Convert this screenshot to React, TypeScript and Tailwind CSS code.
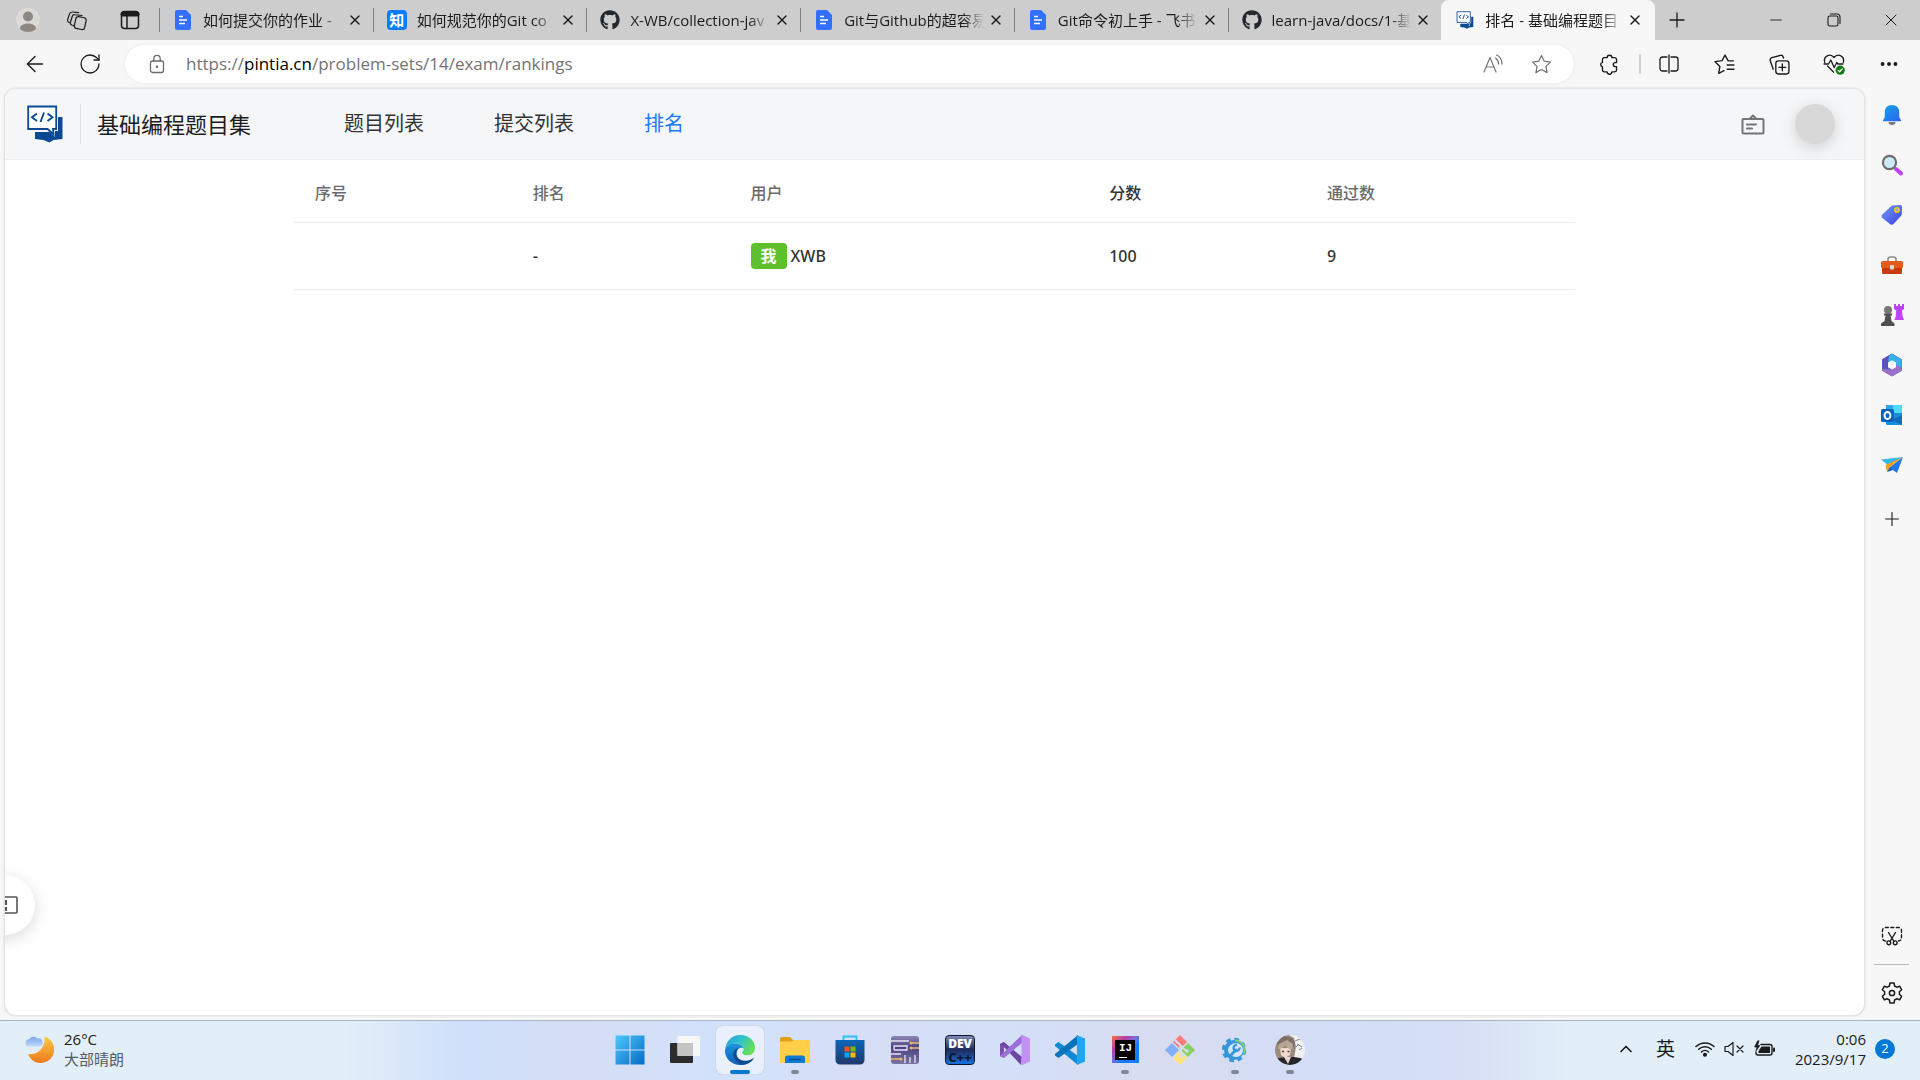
import React from "react";
import { ArrowLeft, RotateCw, X, Plus, Minus, MoreHorizontal, ChevronUp } from "lucide-react";
import { FaGithub } from "react-icons/fa";

type IconProps = { className?: string };

const line = {
  fill: "none",
  stroke: "currentColor",
  strokeLinecap: "round" as const,
  strokeLinejoin: "round" as const,
};

/* ---------- favicons ---------- */

function DocIcon({ className = "" }: IconProps) {
  return (
    <svg viewBox="0 0 16 20" className={`h-5 w-4 ${className}`}>
      <path d="M2 0h9l5 5v13a2 2 0 0 1-2 2H2a2 2 0 0 1-2-2V2a2 2 0 0 1 2-2z" fill="#3370ff" />
      <path d="M4 6.500h4M4 10h8M4 13.500h6" stroke="#fff" strokeWidth="1.400" />
    </svg>
  );
}

function ZhihuIcon() {
  return (
    <span className="flex size-5 items-center justify-center rounded bg-[#0a7cff] text-[15px] leading-none font-bold text-white">
      知
    </span>
  );
}

function PintiaIcon({ className = "" }: IconProps) {
  return (
    <svg viewBox="0 0 36 38" className={className}>
      <path d="M31 12h4.500v22l-9 1-4 2.500-6-2.500-8.500-1V27h15l5 5V26h3z" fill="#0b4a92" />
      <path d="M1.200 1.500h28v22.500h-3.200l.6 5.500-6-5.500H1.200z" fill="#fff" stroke="#0b4a92" strokeWidth="1.800" />
      <path d="M10 8.500l-5 3.700 5 3.700M20.500 8.500l5 3.700-5 3.700M17 7.500l-3.500 9.500" fill="none" stroke="#0b4a92" strokeWidth="1.900" />
    </svg>
  );
}

/* ---------- browser toolbar icons ---------- */

function WorkspacesIcon() {
  return (
    <svg viewBox="0 0 22 22" className="size-[22px]" {...line} strokeWidth="1.200">
      <rect x="9" y="8" width="10.500" height="12" rx="2.500" transform="rotate(12 14 14)" />
      <path d="M7.500 16.500 5.800 16a2.200 2.200 0 0 1-1.400-2.800l1.900-6a2.200 2.200 0 0 1 2.500-1.500l7.200.8" />
      <path d="M3.500 13.500a2.200 2.200 0 0 1-1.800-2.900l1.700-5.400A3 3 0 0 1 6.500 3l6 .6" />
    </svg>
  );
}

function TabPaneIcon() {
  return (
    <svg viewBox="0 0 20 20" className="size-5" {...line} strokeWidth="1.500">
      <rect x="1.500" y="1.500" width="17" height="17" rx="3" />
      <path d="M3 4h14" strokeWidth="5" />
      <path d="M7 6v12" />
    </svg>
  );
}

function LockIcon() {
  return (
    <svg viewBox="0 0 16 20" className="h-5 w-4 text-[#6b6b6b]" {...line} strokeWidth="1.300">
      <rect x="1.500" y="7" width="13" height="11.500" rx="2" />
      <path d="M4.800 7V4.500a3.200 3.200 0 0 1 6.400 0V7" />
      <circle cx="8" cy="12.700" r=".6" fill="currentColor" />
    </svg>
  );
}

function ReadAloudIcon() {
  return (
    <svg viewBox="0 0 20 20" className="size-5 text-[#757575]" {...line} strokeWidth="1.200">
      <path d="M1 18 7 3.500 13 18M3.200 13h7.600" />
      <path d="M12.500 4a7 7 0 0 1 3 6M13.500 1c3.500 1.500 5.500 4.500 5.500 9" />
    </svg>
  );
}

const STAR = "M10 1.500l2.600 5.400 5.900.8-4.300 4.100 1.100 5.900-5.300-2.900-5.300 2.900 1.100-5.900L1.500 7.700l5.900-.8z";

function StarIcon() {
  return (
    <svg viewBox="0 0 20 20" className="size-[21px] text-[#757575]" {...line} strokeWidth="1.200">
      <path d={STAR} />
    </svg>
  );
}

function PuzzleIcon() {
  return (
    <svg viewBox="0 0 20 20" className="size-[21px]" {...line} strokeWidth="1.300">
      <path d="M4.500 3.500h3.200a2.300 2.300 0 0 1 4.600 0H15a1.700 1.700 0 0 1 1.700 1.700v3h-1.200a1.900 1.900 0 0 0 0 3.800h1.200v3.300A1.700 1.700 0 0 1 15 17h-2.700a2.300 2.300 0 0 1-4.600 0H5a1.700 1.700 0 0 1-1.700-1.700v-3a2.300 2.300 0 0 1 0-4.400V5.200a1.700 1.700 0 0 1 1.200-1.700z" />
    </svg>
  );
}

function SplitIcon() {
  return (
    <svg viewBox="0 0 20 20" className="size-5" {...line} strokeWidth="1.300">
      <path d="M8 3H3.500A2.500 2.500 0 0 0 1 5.500v9A2.500 2.500 0 0 0 3.500 17H8M12 3h4.500A2.500 2.500 0 0 1 19 5.500v9a2.500 2.500 0 0 1-2.500 2.500H12M10 1v18" />
    </svg>
  );
}

function FavoritesIcon() {
  return (
    <svg viewBox="0 0 20 20" className="size-[21px]" {...line} strokeWidth="1.300">
      <path d="M18.500 6.500h-5L10.500 1 7.700 6.300 1 7.300l4.600 4.500L4.500 18.500l5-2.600" />
      <path d="M12.500 10.500h6.500M12.500 14.500h6.500" />
    </svg>
  );
}

function CollectionsIcon() {
  return (
    <svg viewBox="0 0 20 20" className="size-[21px]" {...line} strokeWidth="1.300">
      <rect x="6.500" y="6.500" width="12.500" height="12.500" rx="2.500" />
      <path d="M12.700 9.500v6.500M9.500 12.700H16M4 14.500 1.200 6.500a2.300 2.300 0 0 1 1.600-3l8-2.200a2.300 2.300 0 0 1 2.700 1.500l.3 1" />
    </svg>
  );
}

function EssentialsIcon() {
  return (
    <svg viewBox="0 0 22 22" className="size-[22px]" {...line} strokeWidth="1.300">
      <path d="M1.800 9.500C-.2 3.500 7-.5 11 4.500c4-5 11.200-1 9.200 5M4.500 13l6 6" />
      <path d="M1 11h4.500l2.300-4 3.400 7.500 2.600-5 1.200 1.500h5" />
      <circle cx="17.200" cy="17.200" r="4.600" fill="#107c10" stroke="none" />
      <path d="m15.200 17.300 1.400 1.400 2.600-2.800" stroke="#fff" />
    </svg>
  );
}

function RestoreIcon() {
  return (
    <svg viewBox="0 0 14 14" className="size-3.5" {...line} strokeWidth="1.100">
      <rect x="1" y="3" width="10" height="10" rx="1.800" />
      <path d="M3.500 1H10a3 3 0 0 1 3 3v6.500" />
    </svg>
  );
}

/* ---------- side bar icons ---------- */

function BellIcon() {
  return (
    <svg viewBox="0 0 22 24" className="h-6 w-[22px]">
      <defs>
        <linearGradient id="bell" x1="0" y1="0" x2="1" y2="1">
          <stop offset="0" stopColor="#12a5e6" />
          <stop offset="1" stopColor="#2b62f0" />
        </linearGradient>
      </defs>
      <path d="M7.500 19h7a3.500 3 0 0 1-7 0z" fill="#7a7a7a" />
      <path d="M11 2c4.500 0 7.200 3.200 7.200 7v5l1.800 3.300c.2.600 0 .9-.6.900H2.600c-.6 0-.8-.3-.6-.9L3.800 14V9c0-3.800 2.700-7 7.200-7z" fill="url(#bell)" />
    </svg>
  );
}

function SearchIcon() {
  return (
    <svg viewBox="0 0 22 22" className="size-[22px]">
      <path d="m15 15 5 4.500" stroke="#c340f0" strokeWidth="4" strokeLinecap="round" />
      <circle cx="8.500" cy="8.500" r="6.600" fill="#cdeafb" stroke="#6d6d6d" strokeWidth="2.200" />
    </svg>
  );
}

function TagIcon() {
  return (
    <svg viewBox="0 0 22 22" className="size-[22px]">
      <defs>
        <linearGradient id="tag" x1="0" y1="0" x2="1" y2="1">
          <stop offset="0" stopColor="#6f9cff" />
          <stop offset="1" stopColor="#3d3fe0" />
        </linearGradient>
      </defs>
      <path d="M12 1.500 19 1a2 2 0 0 1 2 2l-.2 7a3 3 0 0 1-.9 2l-7.400 8a2.500 2.500 0 0 1-3.300.2L1.500 14a2.500 2.500 0 0 1-.2-3.500l8.500-8a3 3 0 0 1 2.200-1z" fill="url(#tag)" />
      <circle cx="16" cy="6" r="2.200" fill="#8ea1ff" stroke="#f6c915" strokeWidth="1.600" />
    </svg>
  );
}

function ToolboxIcon() {
  return (
    <svg viewBox="0 0 24 20" className="h-5 w-6">
      <path d="M8 7V4.500A2.500 2.500 0 0 1 10.500 2h3A2.500 2.500 0 0 1 16 4.500V7" fill="none" stroke="#8c8c8c" strokeWidth="1.600" />
      <rect x="2" y="11" width="20" height="8" rx="1.500" fill="#c63c0a" />
      <rect x="1" y="6" width="22" height="7" rx="1.500" fill="#e35a1b" />
      <rect x="10" y="10" width="4" height="4.500" rx="1" fill="#d9d9d9" />
    </svg>
  );
}

function ChessIcon() {
  return (
    <svg viewBox="0 0 24 24" className="size-6">
      <path d="M14 1h2v2h2V1h2v2h2V1h2v5l-2 1.500.6 6L24 17h-9.500l1.200-3.500.6-6L14 6z" fill="#bd43f5" />
      <circle cx="8" cy="7" r="4" fill="#777" />
      <path d="M4 10.500h8v2h-1.500l1 5.500 3 2.500V23H1v-2.500L4.500 18l1-5.500H4z" fill="#505050" />
    </svg>
  );
}

function M365Icon() {
  return (
    <svg viewBox="0 0 24 24" className="size-6">
      <path d="M12 1 21.500 6.500v11L12 23l-9.500-5.500v-11z" fill="#6a63c9" stroke="#6a63c9" strokeLinejoin="round" />
      <path d="M12 .8 6 4l-3.500 2.500v8L8 17V9.500l5-3z" fill="#5b52b8" />
      <path d="M12 .8 21.500 6.500V15L16 12V9.500L8 8.500 9 3z" fill="#37b0ec" />
      <path d="m21.500 15 .3 2.500L12 23.300 5 19.500 2.300 16 8 16.500l3 .5 5-3V12z" fill="#9c6fc8" />
      <path d="M12 7.300 16 9.600v4.600l-4 2.300-4-2.300V9.600z" fill="#f7f7f7" />
    </svg>
  );
}

function OutlookIcon() {
  return (
    <svg viewBox="0 0 24 24" className="size-6">
      <rect x="6" y="2" width="16" height="20" rx="1.500" fill="#1490df" />
      <path d="M13 2h9v8h-9z" fill="#50d9ff" />
      <path d="M6 2h7v8H6z" fill="#28a8ea" />
      <path d="m22 12-10 5 10 5z" fill="#0f6cbd" />
      <rect x="1" y="6" width="13" height="13" rx="1.500" fill="#0a63b8" />
      <ellipse cx="7.500" cy="12.500" rx="3" ry="3.500" fill="none" stroke="#fff" strokeWidth="1.900" />
    </svg>
  );
}

function PlaneIcon() {
  return (
    <svg viewBox="0 0 22 20" className="h-5 w-[22px]">
      <path d="M0 4.500 22 2 8 11z" fill="#38b6f0" />
      <path d="M22 2 8.500 12.500 16 18z" fill="#2277e8" />
      <path d="M22 2 4.500 10l1.500 7L9 12z" fill="#f0a01c" />
      <path d="m6 17 3-5 3 3z" fill="#1a5bb8" />
    </svg>
  );
}

function SnipIcon() {
  return (
    <svg viewBox="0 0 22 20" className="h-5 w-[22px]" {...line} strokeWidth="1.400">
      <path d="M4.500 15A3 3 0 0 1 1.500 12V4.500a3 3 0 0 1 3-3h13a3 3 0 0 1 3 3V12a3 3 0 0 1-3 3" strokeDasharray="3 2.500" />
      <path d="m7.500 6.500 5.500 9M14.500 6.500l-5.500 9" />
      <circle cx="7.800" cy="16.800" r="1.900" />
      <circle cx="14.200" cy="16.800" r="1.900" />
    </svg>
  );
}

function GearIcon() {
  return (
    <svg viewBox="0 0 22 22" className="size-[22px]" {...line} strokeWidth="1.500">
      <path d="M9 1h4l.6 3 2 1.200 3-1 2 3.500L18.400 9.800v2.400l2.200 2.100-2 3.500-3-1-2 1.200-.6 3H9l-.6-3-2-1.200-3 1-2-3.500 2.200-2.100V9.800L1.400 7.700l2-3.500 3 1 2-1.200z" />
      <circle cx="11" cy="11" r="2.600" />
    </svg>
  );
}

/* ---------- page icons ---------- */

function BoardIcon() {
  return (
    <svg viewBox="0 0 24 22" className="h-[22px] w-6 text-[#757575]" {...line} strokeWidth="2">
      <rect x="1.500" y="6" width="21" height="14.500" rx="1" />
      <path d="m9 5.500 3-3 3 3M6 11.500h9M6 15.500h5" />
    </svg>
  );
}

function PanelIcon() {
  return (
    <svg viewBox="0 0 22 18" className="h-[18px] w-[22px] text-[#555]" fill="none" stroke="currentColor" strokeWidth="1.600">
      <rect x="1" y="1" width="20" height="16" rx="1" />
      <path d="M10 4v5M10 11v4" strokeWidth="2" />
    </svg>
  );
}

/* ---------- task bar icons ---------- */

function WindowsIcon() {
  return (
    <svg viewBox="0 0 30 30" className="size-[30px]">
      <defs>
        <linearGradient id="win" gradientUnits="userSpaceOnUse" x1="0" y1="0" x2="30" y2="30">
          <stop offset="0" stopColor="#4ecbfb" />
          <stop offset="1" stopColor="#0468c8" />
        </linearGradient>
      </defs>
      <path d="M.5.5h14v14H.5zM15.500.5h14v14h-14zM.5 15.500h14v14h-14zM15.500 15.500h14v14h-14z" fill="url(#win)" />
    </svg>
  );
}

function TaskViewIcon() {
  return (
    <svg viewBox="0 0 30 30" className="size-[30px]">
      <rect x="0" y="8" width="23" height="20" rx="1" fill="#2c2c2c" />
      <rect x="7.500" y="1" width="22.500" height="20" rx="1" fill="#f7f7f7" />
      <rect x="7.500" y="8" width="15.500" height="13" fill="#c4c4c4" />
    </svg>
  );
}

function EdgeIcon() {
  return (
    <svg viewBox="0 0 32 32" className="size-8">
      <defs>
        <linearGradient id="edgeTop" x1="0" y1="0" x2="1" y2=".5">
          <stop offset="0" stopColor="#2597dc" />
          <stop offset=".5" stopColor="#2fc0cf" />
          <stop offset="1" stopColor="#66e05a" />
        </linearGradient>
        <linearGradient id="edgeLow" x1="0" y1="0" x2="0" y2="1">
          <stop offset="0" stopColor="#1d93dd" />
          <stop offset="1" stopColor="#1160b8" />
        </linearGradient>
      </defs>
      <path d="M1 16C2 7 8 1 16.500 1 25 1 31 7 31 13.500c0 4.500-3 8-7.500 8-3.500 0-5.500-1.500-5.500-2.700 0-1 1.500-1.500 1.500-4 0-3-3-5.300-7-5.300C6 9.500 2 12 1 16z" fill="url(#edgeTop)" />
      <path d="M1 16c1-4 5-6.500 10-6.500 5.500 0 8.500 2.500 8.500 5.300 0-1.800-6.500-2.300-7 4.700-.3 5 3 10 9 11-1.500.4-3 .5-5 .5C7 31 .5 24 1 16z" fill="url(#edgeLow)" />
      <path d="M12.500 18c-1 4 2 8 7 8.500 4 .3 7-.5 9.500-2.500.5 0 .8.500.5 1-2 3-5 4.800-8 5.500-7 1-12.500-5-12-10.500.3-3.500 2-5.500 5-6-1.200 1-1.700 2-2 4z" fill="#0e4a92" />
      <path d="M18 18.800c0 1.200 2 2.700 5.500 2.700 2.500 0 4-.7 5.500-1.800l.5 4.300c-4 2.500-8 3-11 2-4.500-1.500-6.500-5.500-4.500-9 1-1.700 3.500-2.500 5.500-2-.2 2-1.500 2.800-1.500 3.800z" fill="#e9f0fb" />
    </svg>
  );
}

function FolderIcon() {
  return (
    <svg viewBox="0 0 32 30" className="h-[30px] w-8">
      <path d="M1 4a2 2 0 0 1 2-2h8l3 3h15v5H1z" fill="#e0a010" />
      <path d="M1 6.500h12l2-1.500h14.500A1.500 1.500 0 0 1 31 6.500V27a1 1 0 0 1-1 1H2a1 1 0 0 1-1-1z" fill="#ffcf48" />
      <path d="M6 28v-5a2.500 2.500 0 0 1 2.500-2.500h15A2.500 2.500 0 0 1 26 23v5z" fill="#0f7ad4" />
      <path d="M10 24.500h12" stroke="#0a4f94" strokeWidth="1.500" />
    </svg>
  );
}

function StoreIcon() {
  return (
    <svg viewBox="0 0 30 30" className="size-[30px]">
      <defs>
        <linearGradient id="store" x1="0" y1="0" x2="0" y2="1">
          <stop offset="0" stopColor="#0b66b8" />
          <stop offset="1" stopColor="#1f3868" />
        </linearGradient>
      </defs>
      <path d="M8.500 6V1.500h13V6" fill="none" stroke="#2fc1f5" strokeWidth="2" />
      <path d="M.5 5h29v20a4.500 4.500 0 0 1-4.500 4.500H5A4.500 4.500 0 0 1 .5 25z" fill="url(#store)" />
      <path d="M9.500 11.500h5v5h-5z" fill="#f25022" />
      <path d="M15.500 11.500h5v5h-5z" fill="#7fba00" />
      <path d="M9.500 17.500h5v5h-5z" fill="#00a4ef" />
      <path d="M15.500 17.500h5v5h-5z" fill="#ffb900" />
    </svg>
  );
}

function CircuitIcon() {
  return (
    <svg viewBox="0 0 28 28" className="size-7">
      <defs>
        <linearGradient id="circuit" x1="0" y1="0" x2="0" y2="1">
          <stop offset="0" stopColor="#8e88b4" />
          <stop offset=".4" stopColor="#4b4284" />
          <stop offset="1" stopColor="#7a729f" />
        </linearGradient>
      </defs>
      <rect width="28" height="28" rx="3" fill="url(#circuit)" />
      <path d="M0 5h18M3 14v-4h14M3 14h13v-3M14 27v-8M19 27v-6M24 27v-8M10 18H0" fill="none" stroke="#e9e6f5" strokeWidth="1.300" />
      <path d="M20 7h8M20 12h8M0 23h10" stroke="#eab66e" strokeWidth="1.300" />
      <g fill="#eab66e">
        <circle cx="20" cy="7" r="1.500" />
        <circle cx="20" cy="12" r="1.500" />
        <circle cx="10" cy="23" r="1.500" />
      </g>
    </svg>
  );
}

function DevCppIcon() {
  return (
    <span className="flex h-[30px] w-[30px] flex-col items-center overflow-hidden rounded-sm border border-[#0c1626] bg-linear-to-b from-[#7f8ab4] via-[#1c2a5c] to-[#1273e0]">
      <span className="text-[12px] leading-[15px] font-extrabold text-white">DEV</span>
      <span className="text-[13px] leading-[13px] font-extrabold text-[#0a1c3c]">C++</span>
    </span>
  );
}

function VisualStudioIcon() {
  return (
    <svg viewBox="0 0 32 32" className="size-8">
      <path d="M1 10 5 8v16l-4-2z" fill="#7a4fb0" />
      <path d="M5 8 1 10l3 2 18 19 1-8z" fill="#6b45a3" />
      <path d="M23 1v8L5 24l-4-2z" fill="#9c6fd8" />
      <path d="m22.500.5 8.500 4v23l-8.500 4z" fill="#c490f5" />
    </svg>
  );
}

function VsCodeIcon() {
  return (
    <svg viewBox="0 0 32 32" className="size-8">
      <path d="M24 31v-9L4.500 8 1 10.500V12z" fill="#0f8ad6" />
      <path d="M24 1v9L4.500 24 1 21.500V20z" fill="#0a74ba" />
      <path d="m23 1 8 3.500v23L23 31z" fill="#24a5f2" />
    </svg>
  );
}

function IntelliJIcon() {
  return (
    <span className="flex size-[27px] items-center justify-center bg-linear-to-br from-[#fc6b2d] via-[#b03aa8] via-30% to-[#167dff] to-60%">
      <span className="flex size-5 flex-col items-start bg-black px-1 pt-1">
        <span className="font-['Liberation_Mono',monospace] text-[11px] leading-[9px] font-bold text-white">IJ</span>
        <span className="mt-1 h-px w-2 bg-white" />
      </span>
    </span>
  );
}

function GitIcon() {
  return (
    <svg viewBox="0 0 32 32" className="size-8">
      <path d="m16 1 7 7-7 7-7-7z" fill="#fb7b78" />
      <path d="m8 9 7 7-7 7-7-7z" fill="#82aefc" />
      <path d="m24 9 7 7-7 7-7-7z" fill="#89d165" />
      <path d="m16 17 7 7-7 7-7-7z" fill="#fde37a" />
      <path d="m11 6 6 6v10M17 13l6 4" fill="none" stroke="#d5def3" strokeWidth="2" />
      <circle cx="17" cy="13" r="1.800" fill="#d5def3" />
      <circle cx="23" cy="17" r="1.800" fill="#d5def3" />
      <circle cx="17" cy="22" r="1.800" fill="#d5def3" />
    </svg>
  );
}

function GearAppIcon() {
  return (
    <svg viewBox="0 0 26 26" className="size-[26px]">
      <circle cx="12" cy="13" r="8" fill="none" stroke="#3797dd" strokeWidth="4" />
      <circle cx="12" cy="13" r="10.500" fill="none" stroke="#3797dd" strokeWidth="3.500" strokeDasharray="4.600 3.650" />
      <circle cx="14" cy="13" r="7" fill="#d8e6f8" />
      <path d="M13 3.500a9.500 9.500 0 0 1 9 13" fill="none" stroke="#7ccf7a" strokeWidth="2" />
      <path d="m9 18 5-5" stroke="#3797dd" strokeWidth="3" strokeLinecap="round" />
      <path d="M17.500 10.500a3 3 0 1 1-2.500-2.500" fill="none" stroke="#3797dd" strokeWidth="2.400" />
    </svg>
  );
}

function PortraitIcon() {
  return (
    <svg viewBox="0 0 30 30" className="size-[30px]">
      <defs>
        <clipPath id="round">
          <circle cx="15" cy="15" r="15" />
        </clipPath>
      </defs>
      <g clipPath="url(#round)">
        <rect width="30" height="30" fill="#f1f1f1" />
        <path d="M0 0h14l5 3 2 9-2 11-6 3-13 2z" fill="#9b8b7f" />
        <path d="M2 8 8 1l9 2 3 5-1 4-8-5-7 5z" fill="#7d6e65" />
        <path d="M5 13h11l-1 7-5 3-4-3z" fill="#f2d9cb" />
        <path d="M3 14c4 0 6-2 7-5 1 3 3 5 7 5l1-5-6-4-8 4z" fill="#b9a797" />
        <path d="M7 16.500h2M12.500 16.500h2" stroke="#4d3a36" strokeWidth="1.400" />
        <path d="M0 24c8-2 20-3 28 0v6H0z" fill="#25252c" />
        <path d="m9 22 4 7 3-7z" fill="#e6d5ca" />
        <path d="m20 6 5-2M21 12l3-3M24 15l3-2M22 9l5 3" stroke="#888" />
      </g>
    </svg>
  );
}

function WeatherIcon() {
  return (
    <svg viewBox="0 0 30 30" className="size-[30px]">
      <defs>
        <linearGradient id="moon" x1="0" y1="0" x2="0" y2="1">
          <stop offset="0" stopColor="#fbc94a" />
          <stop offset="1" stopColor="#ee7a1c" />
        </linearGradient>
        <linearGradient id="cloud" x1="0" y1="0" x2="0" y2="1">
          <stop offset="0" stopColor="#7ca5ea" />
          <stop offset="1" stopColor="#c0d8fa" />
        </linearGradient>
      </defs>
      <path d="M20.500 2.500A13.500 13.500 0 1 1 4 20c8 1.500 18-5 16.500-17.500z" fill="url(#moon)" />
      <path d="M5 12.500a3.600 3.600 0 0 1 .2-7.200A5 5 0 0 1 13.500 4.500a4 4 0 0 1 2 7.900z" fill="url(#cloud)" />
    </svg>
  );
}

function WifiIcon() {
  return (
    <svg viewBox="0 0 20 16" className="h-4 w-5" {...line} strokeWidth="1.500">
      <path d="M1 5.500a13 13 0 0 1 18 0M3.700 8.300a9 9 0 0 1 12.600 0M6.500 11a5 5 0 0 1 7 0" />
      <circle cx="10" cy="13.700" r="1.300" fill="currentColor" />
    </svg>
  );
}

function MutedIcon() {
  return (
    <svg viewBox="0 0 20 16" className="h-4 w-5" {...line} strokeWidth="1.200">
      <path d="M1 5.500h3L9 1.500v13L4 10.500H1zM13 5l6 6M19 5l-6 6" />
    </svg>
  );
}

function BatteryIcon() {
  return (
    <svg viewBox="0 0 22 18" className="h-[18px] w-[22px]" {...line} strokeWidth="1.400">
      <path d="M8 4.500h9a2 2 0 0 1 2 2V13a2 2 0 0 1-2 2H5a2 2 0 0 1-2-2v-1" />
      <path d="M8.500 6.500h8.500V13H5.500v-2z" fill="currentColor" stroke="none" />
      <path d="M4.500 1 1.500 7h2.300L3 11l4-5.500H4.700L6 1z" fill="currentColor" strokeWidth=".6" />
      <path d="M21 8.500v2.500" strokeWidth="2" />
    </svg>
  );
}

/* ---------- browser chrome ---------- */

const tabs = [
  { title: "如何提交你的作业 -", icon: <DocIcon /> },
  { title: "如何规范你的Git co", icon: <ZhihuIcon /> },
  { title: "X-WB/collection-jav", icon: <FaGithub className="size-5 text-[#24292f]" /> },
  { title: "Git与Github的超容易", icon: <DocIcon /> },
  { title: "Git命令初上手 - 飞书", icon: <DocIcon /> },
  { title: "learn-java/docs/1-基", icon: <FaGithub className="size-5 text-[#24292f]" /> },
  { title: "排名 - 基础编程题目", icon: <PintiaIcon className="h-[18px] w-[18px]" />, active: true },
];

function TabStrip() {
  return (
    <header className="flex h-10 shrink-0 items-stretch bg-[#cdcdcd]">
      <div className="flex w-[159px] shrink-0 items-center">
        <button aria-label="个人资料" className="ml-4 flex size-6 items-end justify-center overflow-hidden rounded-full bg-[#dcdad7]">
          <svg viewBox="0 0 24 24" className="size-6 text-[#8c8784]" fill="currentColor">
            <circle cx="12" cy="8.500" r="5" />
            <path d="M3.500 22c0-4 3.500-6.500 8.500-6.500s8.500 2.500 8.500 6.500l-3 2h-11z" />
          </svg>
        </button>
        <button aria-label="工作区" className="ml-[26px]"><WorkspacesIcon /></button>
        <button aria-label="标签页操作" className="ml-8"><TabPaneIcon /></button>
      </div>
      <nav className="grid max-w-[1496px] flex-1 grid-cols-7">
        {tabs.map((t) => (
          <div
            key={t.title}
            className={
              t.active
                ? "flex min-w-0 items-center rounded-t-lg bg-[#f7f7f7] pr-3 pl-3"
                : "flex min-w-0 items-center pr-2.5"
            }
          >
            {!t.active && <span className="mr-[11px] h-6 w-px shrink-0 bg-[#808080]" />}
            <span className="flex w-6 shrink-0 justify-center">{t.icon}</span>
            <a
              href="#"
              className="ml-2 min-w-0 flex-1 overflow-hidden mask-r-from-85% text-[15px] leading-5 whitespace-nowrap text-[#1b1b1b]"
            >
              {t.title}
            </a>
            <button aria-label="关闭标签页" className="ml-1">
              <X className="size-4" strokeWidth={2} />
            </button>
          </div>
        ))}
      </nav>
      <button aria-label="新建标签页" className="ml-2.5"><Plus className="size-6" strokeWidth={1.3} /></button>
      <div className="ml-auto flex items-center">
        <button aria-label="最小化" className="flex w-[58px] justify-center"><Minus className="size-[18px]" strokeWidth={1.2} /></button>
        <button aria-label="还原" className="flex w-[57px] justify-center"><RestoreIcon /></button>
        <button aria-label="关闭" className="flex w-[58px] justify-center"><X className="size-5" strokeWidth={1.2} /></button>
      </div>
    </header>
  );
}

function Toolbar() {
  return (
    <div className="flex h-12 shrink-0 items-center bg-[#f7f7f7] text-[#1b1b1b]">
      <button aria-label="返回" className="ml-[22px]"><ArrowLeft className="size-[26px]" strokeWidth={1.2} /></button>
      <button aria-label="刷新" className="ml-[30px]"><RotateCw className="size-6" strokeWidth={1.3} /></button>
      <div className="ml-[23px] flex h-[38px] min-w-0 flex-1 items-center rounded-full bg-white pr-[22px] pl-6 shadow-[0_0_3px_rgba(0,0,0,0.08)]">
        <LockIcon />
        <a href="#" className="ml-[21px] text-[17px] leading-6 text-[#737373]">
          https://<span className="text-black">pintia.cn</span>/problem-sets/14/exam/rankings
        </a>
        <button aria-label="大声朗读" className="ml-auto"><ReadAloudIcon /></button>
        <button aria-label="收藏此页" className="ml-7"><StarIcon /></button>
      </div>
      <div className="flex items-center pl-[25px]">
        <button aria-label="扩展"><PuzzleIcon /></button>
        <span className="ml-[19px] h-5 w-0.5 bg-[#d0d0d0]" />
        <button aria-label="拆分屏幕" className="ml-[18px]"><SplitIcon /></button>
        <button aria-label="收藏夹" className="ml-[35px]"><FavoritesIcon /></button>
        <button aria-label="集锦" className="ml-[34px]"><CollectionsIcon /></button>
        <button aria-label="浏览器概要" className="ml-[33px]"><EssentialsIcon /></button>
        <button aria-label="更多" className="mr-5 ml-[33px]"><MoreHorizontal className="size-[22px]" strokeWidth={2.2} /></button>
      </div>
    </div>
  );
}

const sideApps = [
  { label: "通知", icon: <BellIcon /> },
  { label: "搜索", icon: <SearchIcon /> },
  { label: "购物", icon: <TagIcon /> },
  { label: "工具", icon: <ToolboxIcon /> },
  { label: "游戏", icon: <ChessIcon /> },
  { label: "Microsoft 365", icon: <M365Icon /> },
  { label: "Outlook", icon: <OutlookIcon /> },
  { label: "Drop", icon: <PlaneIcon /> },
  { label: "自定义", icon: <Plus className="mt-2 size-[22px]" strokeWidth={1.2} /> },
];

function SideBar() {
  return (
    <aside className="flex w-[55px] shrink-0 flex-col items-center pr-0.5">
      {sideApps.map((a) => (
        <button key={a.label} aria-label={a.label} className="flex h-[50px] items-center justify-center pt-1">
          {a.icon}
        </button>
      ))}
      <button aria-label="截图" className="mt-auto"><SnipIcon /></button>
      <span className="mt-[18px] h-px w-[35px] bg-[#b8b8b8]" />
      <button aria-label="设置" className="mt-[17px] mb-3"><GearIcon /></button>
    </aside>
  );
}

/* ---------- page ---------- */

function SiteHeader() {
  return (
    <div className="flex h-[71px] shrink-0 items-center border-b border-[#eaecef] bg-[#f5f6f8]">
      <a href="#" aria-label="首页" className="ml-[22px]"><PintiaIcon className="h-[38px] w-9" /></a>
      <span className="ml-[17px] h-10 w-px bg-[#e2e3e5]" />
      <h1 className="ml-4 text-[22px] leading-7 text-[#1c1c1c]">基础编程题目集</h1>
      <nav className="ml-[93px] flex gap-[70px] text-[20px] leading-7 text-[#333]">
        <a href="#">题目列表</a>
        <a href="#">提交列表</a>
        <a href="#" className="text-[#1a7aff]">排名</a>
      </nav>
      <button aria-label="公告" className="ml-auto"><BoardIcon /></button>
      <button aria-label="用户" className="mr-[29px] ml-[30px] size-10 rounded-full bg-[#d8d8d8] shadow-[0_4px_16px_rgba(0,0,0,0.15)]" />
    </div>
  );
}

function Rankings() {
  return (
    <table className="mx-auto w-full max-w-[1281px] table-fixed text-left text-[16px] leading-6 text-[#333]">
      <thead>
        <tr className="h-[62px] border-b border-[#ebebeb] text-[#6b6b6b]">
          <th className="w-[17%] pt-1 pl-[21px] font-medium">序号</th>
          <th className="w-[17%] pt-1 pl-[21px] font-medium">排名</th>
          <th className="w-[28%] pt-1 pl-[21px] font-medium">用户</th>
          <th className="w-[17%] pt-1 pl-[21px] font-medium text-[#333]">分数</th>
          <th className="pt-1 pl-[21px] font-medium">通过数</th>
        </tr>
      </thead>
      <tbody className="font-['Noto_Sans','Noto_Sans_CJK_SC',sans-serif]">
        <tr className="h-[67px] border-b border-[#ebebeb] font-medium">
          <td className="pl-[21px]" />
          <td className="pl-[21px]">-</td>
          <td className="pl-[21px]">
            <span className="flex items-center gap-1">
              <span className="rounded bg-[#5fc02d] px-2.5 text-[16px] leading-[26px] font-bold text-white">我</span>
              XWB
            </span>
          </td>
          <td className="pl-[21px]">100</td>
          <td className="pl-[21px]">9</td>
        </tr>
      </tbody>
    </table>
  );
}

/* ---------- task bar ---------- */

const taskApps = [
  { label: "开始", icon: <WindowsIcon /> },
  { label: "任务视图", icon: <TaskViewIcon /> },
  { label: "Edge", icon: <EdgeIcon />, active: true },
  { label: "文件资源管理器", icon: <FolderIcon />, running: true },
  { label: "Store", icon: <StoreIcon /> },
  { label: "电路", icon: <CircuitIcon /> },
  { label: "Dev-C++", icon: <DevCppIcon /> },
  { label: "Visual Studio", icon: <VisualStudioIcon /> },
  { label: "VS Code", icon: <VsCodeIcon /> },
  { label: "IntelliJ IDEA", icon: <IntelliJIcon />, running: true },
  { label: "Git", icon: <GitIcon /> },
  { label: "服务", icon: <GearAppIcon />, running: true },
  { label: "头像", icon: <PortraitIcon />, running: true },
];

function TaskBar() {
  return (
    <footer className="grid h-[60px] shrink-0 grid-cols-[1fr_auto_1fr] items-center border-t border-[#a9b5c1] bg-[linear-gradient(90deg,#e2eef8_0%,#e2eef8_18%,#cfe0fa_24%,#d5ddf5_30%,#d2e2fb_38%,#d7def6_45%,#d3e0f8_52%,#d8dcf0_60%,#d2def7_70%,#d6dff5_76%,#e2eef8_82%)] pb-1">
      <button className="ml-6 flex w-fit items-center gap-2.5 text-left text-[15px] leading-5">
        <WeatherIcon />
        <span>
          <span className="block text-[#1b1b1b]">26°C</span>
          <span className="block text-[#555c64]">大部晴朗</span>
        </span>
      </button>
      <div className="flex gap-[7px] pt-0.5">
        {taskApps.map((a) => (
          <button
            key={a.label}
            aria-label={a.label}
            className={
              a.active
                ? "relative flex size-12 items-center justify-center rounded-md bg-[#e9effb] shadow-[0_0_1px_rgba(0,0,0,0.3)]"
                : "relative flex size-12 items-center justify-center"
            }
          >
            {a.icon}
            {a.active && <span className="absolute bottom-0 h-1 w-5 rounded-full bg-[#0078d4]" />}
            {a.running && <span className="absolute bottom-0 h-1 w-2 rounded-full bg-[#7f8792]" />}
          </button>
        ))}
      </div>
      <div className="mr-[25px] flex items-center justify-end text-[#1b1b1b]">
        <button aria-label="显示隐藏的图标"><ChevronUp className="size-5" strokeWidth={2} /></button>
        <button className="ml-5 text-[19px] leading-6">英</button>
        <button aria-label="网络和音量" className="ml-5 flex items-center gap-[9px]">
          <WifiIcon />
          <MutedIcon />
          <BatteryIcon />
        </button>
        <button className="ml-5 text-right text-[15px] leading-5">
          <span className="block">0:06</span>
          <span className="block">2023/9/17</span>
        </button>
        <span className="ml-[9px] flex size-5 items-center justify-center rounded-full bg-[#0078d4] text-[13px] leading-none text-white">2</span>
      </div>
    </footer>
  );
}

export default function App() {
  return (
    <div className="flex h-screen flex-col overflow-hidden bg-[#f7f7f7] font-['Open_Sans','Noto_Sans_CJK_SC',sans-serif] text-[#1b1b1b]">
      <TabStrip />
      <Toolbar />
      <div className="flex min-h-0 flex-1 pb-1">
        <main className="relative ml-1 flex min-w-0 flex-1 flex-col overflow-hidden rounded-xl border border-[#e3e3e3] bg-white shadow-[0_0_2px_rgba(0,0,0,0.15)]">
          <SiteHeader />
          <Rankings />
          <button
            aria-label="展开侧栏"
            className="absolute bottom-[80px] -left-[30px] flex size-[60px] items-center justify-end rounded-full bg-white pr-[17px] shadow-[0_4px_16px_rgba(0,0,0,0.15)]"
          >
            <PanelIcon />
          </button>
        </main>
        <SideBar />
      </div>
      <TaskBar />
    </div>
  );
}
